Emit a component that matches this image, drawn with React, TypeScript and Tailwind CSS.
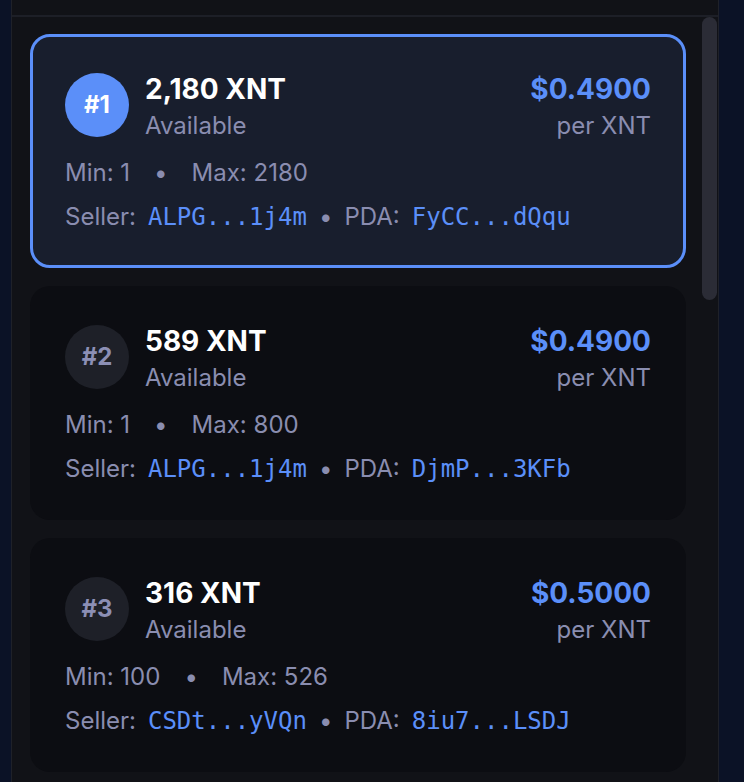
import React from "react";

type Offer = {
  rank: number;
  amount: string;
  price: string;
  min: string;
  max: string;
  seller: string;
  pda: string;
  selected?: boolean;
};

const offers: Offer[] = [
  { rank: 1, amount: "2,180", price: "$0.4900", min: "1", max: "2180", seller: "ALPG...1j4m", pda: "FyCC...dQqu", selected: true },
  { rank: 2, amount: "589", price: "$0.4900", min: "1", max: "800", seller: "ALPG...1j4m", pda: "DjmP...3KFb" },
  { rank: 3, amount: "316", price: "$0.5000", min: "100", max: "526", seller: "CSDt...yVQn", pda: "8iu7...LSDJ" },
];

function OfferCard({ o }: { o: Offer }) {
  return (
    <div
      className={
        o.selected
          ? "shrink-0 rounded-[20px] border-[3px] border-[#5b8ff9] bg-[#181e2d] px-[32px] pt-[35px] pb-[33px]"
          : "shrink-0 rounded-[20px] border-[3px] border-transparent bg-[#0c0d12] px-[32px] pt-[35px] pb-[33px]"
      }
    >
      <div className="flex items-start justify-between">
        <div className="flex items-start gap-[16px]">
          <div
            className={
              o.selected
                ? "mt-[1px] flex h-16 w-16 items-center justify-center rounded-full bg-[#5b8ff9] text-[24px] font-bold text-white"
                : "mt-[1px] flex h-16 w-16 items-center justify-center rounded-full bg-[#1e2028] text-[24px] font-bold text-[#8c8fb5]"
            }
          >
            #{o.rank}
          </div>
          <div className="flex flex-col">
            <div className="text-[28px] font-bold leading-[34px] text-white">{o.amount} XNT</div>
            <div className="mt-[5px] text-[24px] leading-[30px] text-[#8a8db0]">Available</div>
          </div>
        </div>
        <div className="flex flex-col items-end">
          <div className="text-[28px] font-bold leading-[34px] text-[#5b8ff9]">{o.price}</div>
          <div className="mt-[5px] text-[24px] leading-[30px] text-[#8a8db0]">per XNT</div>
        </div>
      </div>
      <div className="mt-[18px] flex items-center text-[24px] leading-[28px] text-[#8a8db0]">
        <span>Min: {o.min}</span>
        <span className="mx-[24px]">•</span>
        <span>Max: {o.max}</span>
      </div>
      <div className="mt-[15px] flex items-baseline text-[24px] leading-[30px] text-[#8a8db0]">
        <span>Seller:</span>
        <span className="ml-[12px] font-['DejaVu_Sans_Mono',monospace] text-[24px] text-[#5b8ff9]">{o.seller}</span>
        <span className="ml-[12px] mr-[12px]">•</span>
        <span>PDA:</span>
        <span className="ml-[12px] font-['DejaVu_Sans_Mono',monospace] text-[24px] text-[#5b8ff9]">{o.pda}</span>
      </div>
    </div>
  );
}

export default function App() {
  return (
    <div className="h-[782px] w-[744px] overflow-hidden bg-[#0b1226] font-['Inter','Noto_Sans',sans-serif]">
      <div className="ml-[11px] flex h-full w-[708px] flex-col border-x border-[#1f2129] bg-[#111217]">
        <div className="h-[17px] shrink-0 border-b-2 border-[#1d1f27]" />
        <div className="flex min-h-0 flex-1">
          <div className="flex min-w-0 flex-1 flex-col gap-[18px] overflow-hidden pt-[17px] pl-[18px] pr-[16px]">
            {offers.map((o) => (
              <OfferCard key={o.rank} o={o} />
            ))}
          </div>
          <div className="w-[16px] shrink-0">
            <div className="h-[283px] w-[15px] rounded-full bg-[#2b2c36]" />
          </div>
        </div>
      </div>
    </div>
  );
}
